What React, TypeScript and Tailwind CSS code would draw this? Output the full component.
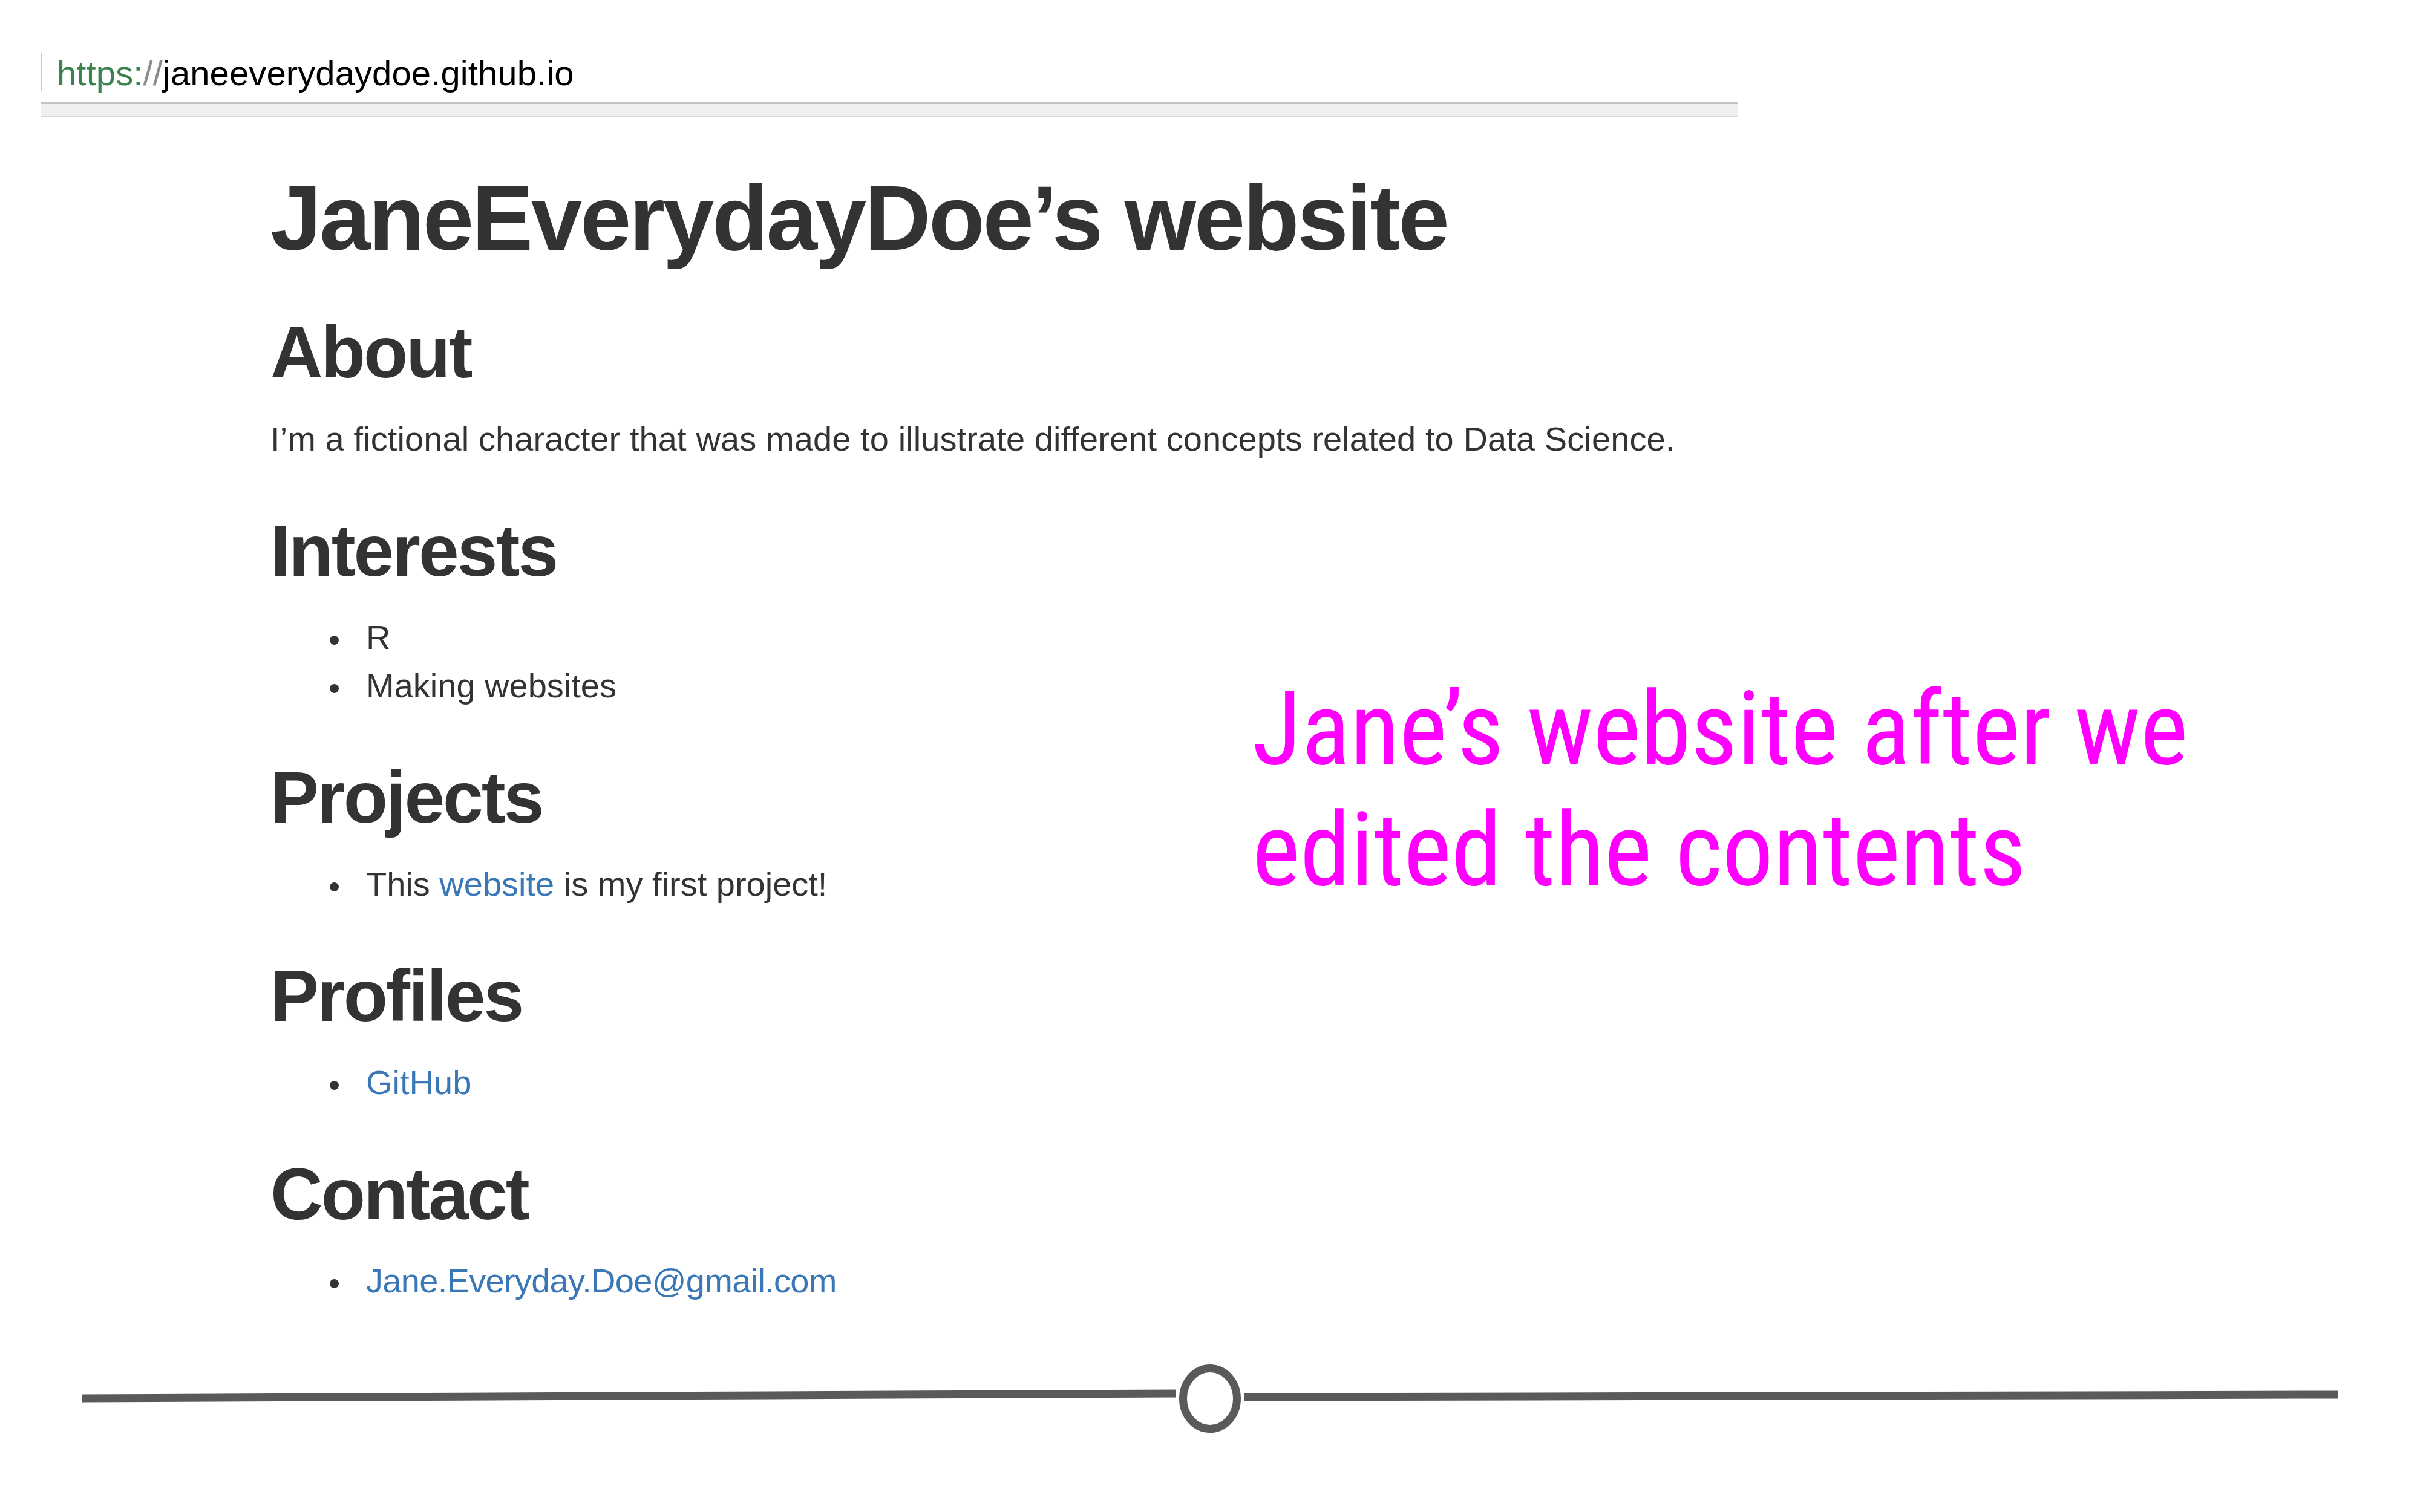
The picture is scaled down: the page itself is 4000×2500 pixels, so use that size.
import React from "react";

const H2 = ({ children, first }: { children: React.ReactNode; first?: boolean }) => (
  <h2
    className={`${first ? "mt-[72px]" : "mt-[78px]"} mb-[38px] text-[120px] leading-[132px] font-bold tracking-[-3px] text-[#333333] whitespace-nowrap`}
  >
    {children}
  </h2>
);

const List = ({ children }: { children: React.ReactNode }) => (
  <ul className="list-none pl-[98px] text-[56px] leading-[80px] text-[#333333] whitespace-nowrap">{children}</ul>
);

const Item = ({ children }: { children: React.ReactNode }) => (
  <li className="flex items-start">
    <span className="mt-[37px] mr-[45px] w-[15px] h-[15px] rounded-full bg-[#333333] shrink-0" />
    <span>{children}</span>
  </li>
);

export default function App() {
  return (
    <div className="w-[4000px] h-[2500px] bg-white overflow-hidden font-['Liberation_Sans',Arial,sans-serif] flex flex-col">
      {/* browser address bar */}
      <div className="ml-[67px] w-[2805px] flex flex-col">
        <div className="mt-[88px] flex items-start">
          <div className="ml-[1px] w-[2px] h-[62px] bg-[#c9c9c9]" />
          <div className="pl-[24px] text-[58px] leading-[66px] tracking-[0.1px] whitespace-nowrap">
            <span className="text-[#3c8150]">https:</span>
            <span className="text-[#8c8c8c]">//</span>
            <span className="text-black">janeeverydaydoe.github.io</span>
          </div>
        </div>
        <div className="mt-[15px] h-[25px] border-t-[3px] border-t-[#c4c4c4] border-b-[2px] border-b-[#d9d9d9] bg-[#efefef]" />
      </div>

      {/* page content + annotation */}
      <div className="mt-[83px] flex items-start">
        <div className="ml-[447px] w-[1623px] shrink-0 flex flex-col">
          <h1 className="text-[152px] leading-[167px] font-bold tracking-[-3.4px] text-[#333333] whitespace-nowrap">
            JaneEverydayDoe’s website
          </h1>
          <H2 first>About</H2>
          <p className="text-[56px] leading-[80px] tracking-[0.1px] text-[#333333] whitespace-nowrap">
            I’m a fictional character that was made to illustrate different concepts related to Data Science.
          </p>
          <H2>Interests</H2>
          <List>
            <Item>R</Item>
            <Item>Making websites</Item>
          </List>
          <H2>Projects</H2>
          <List>
            <Item>
              This <a className="text-[#3a77b6]">website</a> is my first project!
            </Item>
          </List>
          <H2>Profiles</H2>
          <List>
            <Item>
              <a className="text-[#3a77b6]">GitHub</a>
            </Item>
          </List>
          <H2>Contact</H2>
          <List>
            <Item>
              <a className="text-[#3a77b6] tracking-[-0.7px]">Jane.Everyday.Doe@gmail.com</a>
            </Item>
          </List>
        </div>
        <div className="mt-[829px] text-[168px] leading-[200px] text-[#ff00ff] font-['Roboto',sans-serif] [font-stretch:75%] whitespace-nowrap">
          <div>Jane’s website after we</div>
          <div>edited the contents</div>
        </div>
      </div>

      {/* slider */}
      <svg className="mt-[83px] block" width="4000" height="160" viewBox="0 2240 4000 160">
        <line x1="135" y1="2311" x2="1944" y2="2303" stroke="#5a5a5a" strokeWidth="13" />
        <line x1="2056" y1="2309" x2="3865" y2="2305" stroke="#5a5a5a" strokeWidth="13" />
        <ellipse cx="2000" cy="2311.5" rx="44.5" ry="50" fill="none" stroke="#5a5a5a" strokeWidth="13" />
      </svg>
    </div>
  );
}
